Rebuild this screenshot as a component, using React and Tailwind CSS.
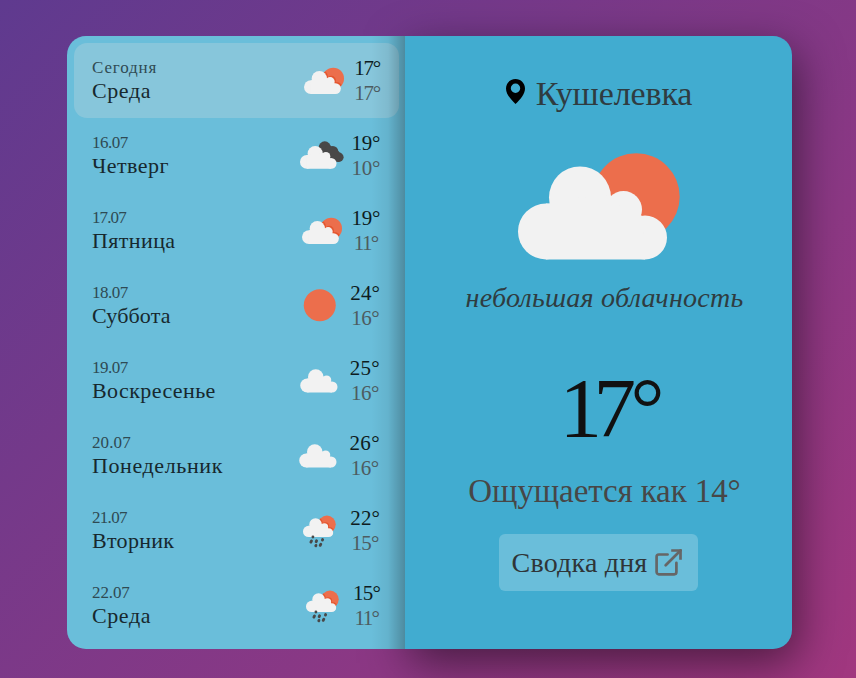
function Cloud({ fill = '#f2f2f2' }) {
  return (
    <g fill={fill}>
      <circle cx="28" cy="65" r="28" />
      <circle cx="62" cy="31" r="31" />
      <circle cx="105.5" cy="43" r="18.5" />
      <circle cx="127" cy="71" r="22" />
      <path d="M28 37H31L62 31L93 29L105 43L124 49.2L127 93H28z" />
    </g>
  );
}

function SunnyCloud({ shaded }) {
  return (
    <>
      <circle cx="118.2" cy="30.2" r="43.5" fill="#ec6e4c" />
      {shaded && (
        <g clipPath="url(#sunClip)">
          <g transform="translate(5 -5)">
            <Cloud fill="#e4552e" />
          </g>
        </g>
      )}
      <Cloud />
    </>
  );
}

function WeatherIcon({ kind, x = 20, y = 60, scale = 1, shaded = true, className }) {
  if (kind === 'clear') {
    return (
      <svg viewBox="0 0 200 200" className={className}>
        <circle cx="99" cy="97" r="64" fill="#ec6e4c" />
      </svg>
    );
  }
  return (
    <svg viewBox="0 0 200 200" className={className}>
      <g transform={`translate(${x} ${y}) scale(${scale})`}>
        {kind === 'broken' && (
          <g fill="#484848">
            <circle cx="101" cy="6" r="25" />
            <circle cx="134" cy="22" r="22" />
            <circle cx="159" cy="46" r="19" />
            <path d="M100 20L110 -8L150 12L168 34L160 65L125 62z" />
          </g>
        )}
        {kind === 'few' || kind === 'rain' ? <SunnyCloud shaded={shaded} /> : <Cloud />}
        {kind === 'rain' && (
          <path
            d="M49 92v1M42 112l-3 6M67 111l-2 5M97 105l-1 3M64 134l-1 2M88 128l-3 6"
            stroke="#484848"
            strokeWidth="14"
            strokeLinecap="round"
          />
        )}
      </g>
    </svg>
  );
}

const days = [
  { date: 'Сегодня', dateTrack: 'tracking-[0.85px]', day: 'Среда', dayTrack: 'tracking-[0.6px]', kind: 'few', scale: 0.99, w: 'w-[31.7px]', hi: '17°', lo: '17°', hiTrack: 'tracking-[-1.2px]', loTrack: 'tracking-[-1.2px]', active: true },
  { date: '16.07', dateTrack: 'tracking-[-0.5px]', day: 'Четверг', dayTrack: 'tracking-[0.45px]', kind: 'broken', scale: 0.98, w: 'w-[36px]', hi: '19°', lo: '10°', hiTrack: 'tracking-[-0.3px]', loTrack: 'tracking-[-0.3px]' },
  { date: '17.07', dateTrack: 'tracking-[-0.9px]', day: 'Пятница', dayTrack: 'tracking-[0.4px]', kind: 'few', scale: 0.99, w: 'w-[34.5px]', hi: '19°', lo: '11°', hiTrack: 'tracking-[-0.3px]', loTrack: 'tracking-[-1.6px]' },
  { date: '18.07', dateTrack: 'tracking-[-0.5px]', day: 'Суббота', dayTrack: 'tracking-[0.15px]', kind: 'clear', w: 'w-[36.5px]', hi: '24°', lo: '16°', hiTrack: 'tracking-[0.1px]', loTrack: 'tracking-[-0.5px]' },
  { date: '19.07', dateTrack: 'tracking-[-0.5px]', day: 'Воскресенье', dayTrack: 'tracking-[0.4px]', kind: 'cloud', x: 25, y: 53, w: 'w-[37px]', hi: '25°', lo: '16°', hiTrack: 'tracking-[0.3px]', loTrack: 'tracking-[-0.5px]' },
  { date: '20.07', dateTrack: 'tracking-[0.1px]', day: 'Понедельник', dayTrack: 'tracking-[0.6px]', kind: 'cloud', x: 25, y: 53, w: 'w-[38px]', hi: '26°', lo: '16°', hiTrack: 'tracking-[0.4px]', loTrack: 'tracking-[-0.5px]' },
  { date: '21.07', dateTrack: 'tracking-[-0.7px]', day: 'Вторник', dayTrack: 'tracking-[0.3px]', kind: 'rain', x: 32, y: 49, scale: 0.81, w: 'w-[36px]', hi: '22°', lo: '15°', hiTrack: 'tracking-[0.1px]', loTrack: 'tracking-[-0.7px]' },
  { date: '22.07', dateTrack: 'tracking-[-0.1px]', day: 'Среда', dayTrack: 'tracking-[0.6px]', kind: 'rain', x: 32, y: 49, scale: 0.81, w: 'w-[33px]', hi: '15°', lo: '11°', hiTrack: 'tracking-[-0.8px]', loTrack: 'tracking-[-1.6px]' },
];

function DayRow({ d }) {
  return (
    <li className={`flex h-[75px] items-center rounded-[13px] px-[18px] ${d.active ? 'bg-[#e0e0e0]/25' : ''}`}>
      <div className="flex-1 text-[#17282e]">
        <div className={`text-[17px] leading-[20px] text-[#2f4a53] ${d.dateTrack}`}>{d.date}</div>
        <div className={`text-[22px] leading-[25px] ${d.dayTrack}`}>{d.day}</div>
      </div>
      <WeatherIcon kind={d.kind} x={d.x} y={d.y} scale={d.scale} className="size-[50px] shrink-0" />
      <div className={`flex shrink-0 justify-end pr-[1px] text-[21px] leading-[25px] ${d.w}`}>
        <div className="flex flex-col items-center">
          <span className={`text-[#0e1c21] ${d.hiTrack}`}>{d.hi}</span>
          <span className={`text-[#4d5c61] ${d.loTrack}`}>{d.lo}</span>
        </div>
      </div>
    </li>
  );
}

function PinIcon() {
  return (
    <svg viewBox="0 0 19 25" className="mt-[-6px] h-[25px] w-[19px]">
      <path
        fillRule="evenodd"
        d="M9.5 0C4.2 0 0 4.2 0 9.4C0 15 4.5 20 9.5 25C14.5 20 19 15 19 9.4C19 4.2 14.8 0 9.5 0zM9.5 4.6a4.7 4.7 0 1 1 0 9.4a4.7 4.7 0 0 1 0-9.4z"
      />
    </svg>
  );
}

function OpenIcon() {
  return (
    <svg viewBox="0 0 27 27" className="size-[27px]" fill="none" stroke="#666" strokeWidth="2.7">
      <path d="M12.6 5.5H3.8a2.2 2.2 0 0 0-2.2 2.2v15.4a2.2 2.2 0 0 0 2.2 2.2h15.4a2.2 2.2 0 0 0 2.2-2.2v-9.3" strokeLinecap="round" />
      <path d="M10.7 16.3L25.5 1.5" strokeLinecap="round" />
      <path d="M16.2 1.5h9.3v9.3" />
    </svg>
  );
}

export default function App() {
  return (
    <div className="h-[678px] w-[856px] overflow-hidden bg-linear-[135deg] from-[#5f3a8f] to-[#a1377f] pt-[36px] pl-[67px] font-['Liberation_Serif',serif]">
      <svg className="absolute size-0">
        <clipPath id="sunClip">
          <circle cx="118.2" cy="30.2" r="43.5" />
        </clipPath>
      </svg>
      <div className="flex h-[613px] w-[725px]">
        <aside className="relative z-10 w-[338px] rounded-l-[19px] bg-[#6abeda]">
          <ul className="py-[7px] pl-[7px] pr-[6px]">
            {days.map((d) => (
              <DayRow key={d.date} d={d} />
            ))}
          </ul>
          <div className="absolute inset-y-0 right-0 w-[34px] bg-linear-to-r from-black/0 via-black/6 to-black/27" />
        </aside>
        <main className="flex w-[387px] flex-col items-center rounded-r-[19px] bg-[#41acd0] pl-[12px] text-[#2f3c41] shadow-[5px_14px_45px_rgba(0,0,0,0.5)]">
          <div className="mt-[38px] -ml-[11px] flex h-[40px] items-center gap-[11px]">
            <PinIcon />
            <h1 className="text-[34px] leading-[40px] tracking-[-0.1px]">Кушелевка</h1>
          </div>
          <WeatherIcon kind="few" shaded={false} y={60.5} className="mt-[-8px] -ml-[13px] size-[200px]" />
          <p className="mt-[-26px] text-[28px] italic leading-[36px] tracking-[0.25px]">небольшая облачность</p>
          <div className="mt-[42px] ml-[15px] flex text-[85px] leading-[100px] text-[#111]">
            <span className="tracking-[-8.5px]">17</span>
            <span className="ml-[3px]">°</span>
          </div>
          <p className="mt-[13px] text-[33px] leading-[40px] tracking-[-0.1px] text-[#474747]">Ощущается как 14°</p>
          <button className="mt-[23px] -ml-[13px] flex h-[57px] w-[199px] items-center justify-center gap-[8px] rounded-[6px] bg-[#6abeda] pr-[2px] text-[28px] tracking-[0.2px] text-[#2f3538]">
            Сводка дня
            <OpenIcon />
          </button>
        </main>
      </div>
    </div>
  );
}
